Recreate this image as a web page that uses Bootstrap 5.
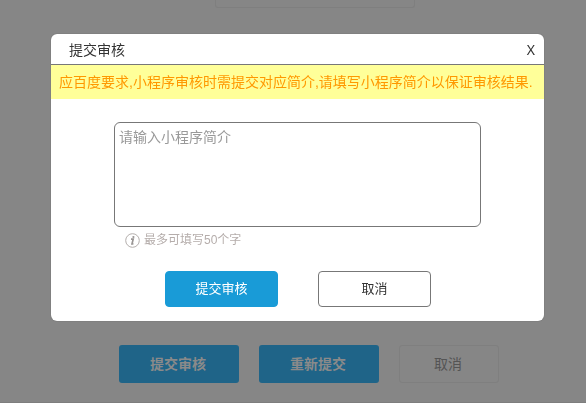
<!DOCTYPE html>
<html lang="zh-CN">
<head>
<meta charset="utf-8">
<meta name="viewport" content="width=device-width, initial-scale=1">
<title>提交审核</title>
<link href="https://cdn.jsdelivr.net/npm/bootstrap@5.3.0/dist/css/bootstrap.min.css" rel="stylesheet">
<style>
html, body { height: 100%; overflow: hidden; }
body { font-family: "Liberation Sans", "Noto Sans CJK SC", sans-serif; font-size: 14px; line-height: 20px; background: #868686; color: #333; }
.page-form { height: 403px; border-bottom: 1px solid #7e7e7e; }
.page-field { width: 200px; height: 8px; margin-left: 215px; border: 1px solid #7f7f7f; border-top: 0; border-radius: 0 0 3px 3px; }
.page-actions { gap: 20px; padding: 0 0 19px 119px; }
.page-btn { width: 120px; height: 38px; padding: 0 2px 0 0; font-size: 14px; line-height: 36px; border-radius: 3px; font-weight: 700; color: #8a8a8a; background: #1f6488; border: 0; }
.page-btn-plain { width: 100px; font-weight: 400; color: #545454; background: transparent; border: 1px solid #7f7f7f; }
.review-overlay { padding: 34px 42px 0 51px; }
.review-dialog { width: 493px; height: 287px; border: 0; border-radius: 6px; overflow: hidden; box-shadow: 0 0 1px #555; }
.review-head { height: 31px; padding: 2px 9px 0 18px; border-bottom: 1px solid #777; border-radius: 0; }
.review-title { font-size: 14px; line-height: 20px; font-weight: 400; }
.close-x { font: 14px/20px "Noto Sans", sans-serif; color: #333; }
.review-notice { height: 34px; padding: 1px 8px 0; line-height: 32px; background: #ff9; color: #ff9800; white-space: nowrap; }
.review-body { padding: 23px 63px 0; }
.intro-input { width: 367px; height: 105px; padding: 4px; font-size: 14px; line-height: 20px; border: 1px solid #777; border-radius: 6px; resize: none; }
.intro-input::placeholder { color: #999; }
.hint { margin: 4px 0 0 11px; height: 18px; gap: 4px; font-size: 12px; line-height: 18px; color: #b5adab; }
.dialog-actions { gap: 40px; margin: 22px 0 0 51px; }
.dialog-btn { width: 113px; height: 36px; padding: 0; font-size: 13px; line-height: 34px; border-radius: 4px; }
.dialog-btn-main { color: #fff; background: #199bd7; border-color: #199bd7; }
.dialog-btn-plain { color: #333; background: #fff; border-color: #777; }
</style>
<script src="https://cdn.jsdelivr.net/npm/bootstrap@5.3.0/dist/js/bootstrap.bundle.min.js"></script>
</head>
<body>
<main class="page-form d-flex flex-column justify-content-between">
  <div class="page-field"></div>
  <div class="page-actions d-flex">
    <button type="button" class="btn page-btn">提交审核</button>
    <button type="button" class="btn page-btn">重新提交</button>
    <button type="button" class="btn page-btn page-btn-plain">取消</button>
  </div>
</main>
<div class="review-overlay position-fixed top-0 start-0">
  <div class="modal-content review-dialog bg-white" role="dialog" aria-labelledby="reviewTitle">
    <div class="review-head d-flex align-items-center justify-content-between">
      <h1 class="review-title mb-0" id="reviewTitle">提交审核</h1>
      <span class="close-x" role="button">X</span>
    </div>
    <div class="review-notice">应百度要求,小程序审核时需提交对应简介,请填写小程序简介以保证审核结果.</div>
    <div class="review-body">
      <textarea class="form-control intro-input" placeholder="请输入小程序简介"></textarea>
      <div class="hint d-flex align-items-center">
        <svg width="15" height="15" viewBox="0 0 15 15" aria-hidden="true">
          <circle cx="7.5" cy="7.5" r="6.8" fill="none" stroke="#b3aeac" stroke-width="1"/>
          <path d="M6 6.2h2.2L7 10.8h1.4" fill="none" stroke="#999594" stroke-width="1.7"/>
          <circle cx="8.4" cy="4" r="1.1" fill="#999594"/>
        </svg>
        <span>最多可填写50个字</span>
      </div>
      <div class="dialog-actions d-flex">
        <button type="button" class="btn dialog-btn dialog-btn-main">提交审核</button>
        <button type="button" class="btn dialog-btn dialog-btn-plain">取消</button>
      </div>
    </div>
  </div>
</div>
</body>
</html>
